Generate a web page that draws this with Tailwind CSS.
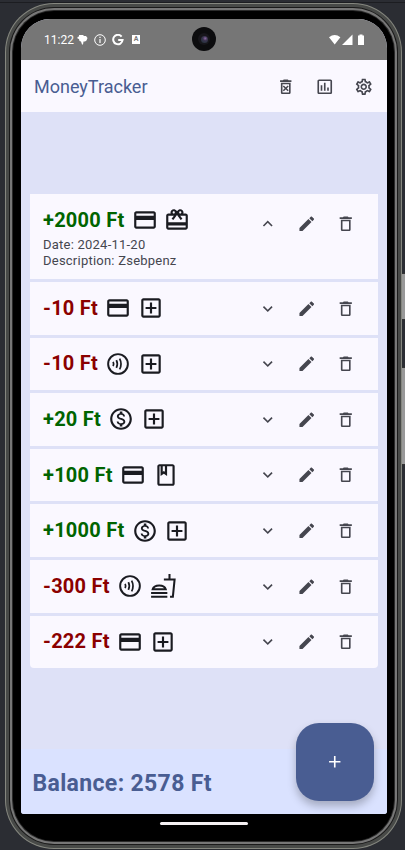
<!DOCTYPE html>
<html lang="en">
<head>
<meta charset="utf-8">
<title>MoneyTracker</title>
<script src="https://cdn.jsdelivr.net/npm/@tailwindcss/browser@4"></script>
</head>
<body class="relative h-[850px] w-[405px] overflow-hidden bg-[#2b2d33] font-[Roboto,sans-serif]">
<svg class="hidden">
  <symbol id="card" viewBox="0 0 24 24"><path d="M20 4H4c-1.11 0-1.99.89-1.99 2L2 18c0 1.11.89 2 2 2h16c1.11 0 2-.89 2-2V6c0-1.11-.89-2-2-2zm0 14H4v-6h16v6zm0-10H4V6h16v2z"/></symbol>
  <symbol id="gift" viewBox="0 0 24 24"><path d="M20 6h-2.18c.11-.31.18-.65.18-1 0-1.66-1.34-3-3-3-1.05 0-1.96.54-2.5 1.35l-.5.67-.5-.68C10.96 2.54 10.05 2 9 2 7.34 2 6 3.34 6 5c0 .35.07.69.18 1H4c-1.11 0-1.99.89-1.99 2L2 19c0 1.11.89 2 2 2h16c1.11 0 2-.89 2-2V8c0-1.11-.89-2-2-2zm-5-2c.55 0 1 .45 1 1s-.45 1-1 1-1-.45-1-1 .45-1 1-1zM9 4c.55 0 1 .45 1 1s-.45 1-1 1-1-.45-1-1 .45-1 1-1zm11 15H4v-2h16v2zm0-5H4V8h5.08L7 10.83 8.62 12 11 8.76l1-1.36 1 1.36L15.38 12 17 10.83 14.92 8H20v6z"/></symbol>
  <symbol id="plusbox" viewBox="0 0 24 24"><path d="M19 3H5c-1.11 0-2 .9-2 2v14c0 1.1.89 2 2 2h14c1.1 0 2-.9 2-2V5c0-1.1-.9-2-2-2zm0 16H5V5h14v14zm-8-2h2v-4h4v-2h-4V7h-2v4H7v2h4z"/></symbol>
  <symbol id="book" viewBox="0 0 24 24"><path d="M18 2H6c-1.1 0-2 .9-2 2v16c0 1.1.9 2 2 2h12c1.1 0 2-.9 2-2V4c0-1.1-.9-2-2-2zM9 4h2v5l-1-.75L9 9V4zm9 16H6V4h1v9l3-2.25L13 13V4h5v16z"/></symbol>
  <symbol id="dollar" viewBox="0 0 24 24"><path d="M12 2C6.48 2 2 6.48 2 12s4.48 10 10 10 10-4.48 10-10S17.52 2 12 2zm0 18c-4.41 0-8-3.59-8-8s3.59-8 8-8 8 3.59 8 8-3.59 8-8 8zm.31-8.86c-1.77-.45-2.34-.94-2.34-1.67 0-.84.79-1.43 2.1-1.43 1.38 0 1.9.66 1.94 1.64h1.71c-.05-1.34-.87-2.57-2.49-2.97V5H10.9v1.69c-1.51.32-2.72 1.3-2.72 2.81 0 1.79 1.49 2.69 3.66 3.21 1.95.46 2.34 1.15 2.34 1.87 0 .53-.39 1.39-2.1 1.39-1.6 0-2.23-.72-2.32-1.64H8.04c.1 1.7 1.36 2.66 2.86 2.97V19h2.34v-1.67c1.52-.29 2.72-1.16 2.73-2.77-.01-2.2-1.9-2.96-3.66-3.42z"/></symbol>
  <symbol id="contactless" viewBox="0 0 24 24"><g fill="none" stroke="currentColor"><circle cx="12" cy="12" r="9.1" stroke-width="1.8"/><path stroke-width="1.6" d="M7.5 10c.6 1.2.6 2.8 0 4M10.500 8.500c1.100 2.200 1.100 4.800 0 7M13.500 7c1.600 3.100 1.600 6.900 0 10"/></g></symbol>
  <symbol id="burger" viewBox="0 0 24 24"><g fill="none" stroke="currentColor" stroke-width="1.9"><path d="M1 18.500h15M1 22h15M2.500 15h12c-1.300-4.700-10.700-4.700-12 0zM18 1v5M12.800 6h9.900l-1.600 16H18.500"/></g></symbol>
  <symbol id="edit" viewBox="0 0 24 24"><path d="M3 17.25V21h3.75L17.81 9.94l-3.75-3.75L3 17.25zM20.71 7.04c.39-.39.39-1.02 0-1.41l-2.34-2.34c-.39-.39-1.02-.39-1.41 0l-1.83 1.83 3.75 3.75 1.83-1.83z"/></symbol>
  <symbol id="trash" viewBox="0 0 24 24"><path d="M6 19c0 1.1.9 2 2 2h8c1.100 0 2-.9 2-2V7H6v12zM8 9h8v10H8V9zm7.500-5l-1-1h-5l-1 1H4.500v2h15V4z"/></symbol>
  <symbol id="down" viewBox="0 0 24 24"><path d="M7.410 8.590 12 13.170l4.590-4.580L18 10l-6 6-6-6z"/></symbol>
  <symbol id="up" viewBox="0 0 24 24"><path d="M7.410 15.410 12 10.830l4.590 4.580L18 14l-6-6-6 6z"/></symbol>
  <symbol id="clear" viewBox="0 0 24 24"><path d="M6 19c0 1.100.9 2 2 2h8c1.100 0 2-.9 2-2V7H6v12zM8 9h8v10H8V9zm7.500-5l-1-1h-5l-1 1H5v2h14V4z"/><path d="m9 11 6 6m0-6-6 6" fill="none" stroke="currentColor" stroke-width="1.900"/></symbol>
  <symbol id="chart" viewBox="0 0 24 24"><path d="M19 3H5c-1.100 0-2 .9-2 2v14c0 1.100.9 2 2 2h14c1.100 0 2-.9 2-2V5c0-1.100-.9-2-2-2zm0 16H5V5h14v14zM7 10h2v7H7zM11 7h2v10h-2zM15 13h2v4h-2z"/></symbol>
  <symbol id="gear" viewBox="0 0 24 24"><path d="M19.43 12.98c.04-.32.07-.64.07-.98 0-.34-.03-.66-.07-.98l2.11-1.65c.19-.15.24-.42.12-.64l-2-3.46c-.09-.16-.26-.25-.44-.25-.06 0-.12.01-.17.03l-2.49 1c-.52-.4-1.08-.73-1.69-.98l-.38-2.65C14.46 2.18 14.25 2 14 2h-4c-.25 0-.46.18-.49.42l-.38 2.65c-.61.25-1.17.59-1.69.98l-2.49-1c-.06-.02-.12-.03-.18-.03-.17 0-.34.09-.43.25l-2 3.46c-.13.22-.07.49.12.64l2.11 1.65c-.04.32-.07.65-.07.98 0 .33.03.66.07.98l-2.11 1.65c-.19.15-.24.42-.12.64l2 3.46c.09.16.26.25.44.25.06 0 .12-.01.17-.03l2.49-1c.52.4 1.08.73 1.69.98l.38 2.65c.03.24.24.42.49.42h4c.25 0 .46-.18.49-.42l.38-2.65c.61-.25 1.17-.59 1.69-.98l2.49 1c.06.02.12.03.18.03.17 0 .34-.09.43-.25l2-3.46c.12-.22.07-.49-.12-.64l-2.11-1.65zm-1.98-1.71c.04.31.05.52.05.73 0 .21-.02.43-.05.73l-.14 1.13.89.7 1.08.84-.7 1.21-1.27-.51-1.04-.42-.9.68c-.43.32-.84.56-1.25.73l-1.06.43-.16 1.13-.2 1.35h-1.4l-.19-1.35-.16-1.13-1.06-.43c-.43-.18-.83-.41-1.23-.71l-.91-.7-1.06.43-1.27.51-.7-1.21 1.08-.84.89-.7-.14-1.13c-.03-.31-.05-.54-.05-.74s.02-.43.05-.73l.14-1.13-.89-.7-1.08-.84.7-1.21 1.27.51 1.04.42.9-.68c.43-.32.84-.56 1.25-.73l1.06-.43.16-1.13.2-1.35h1.39l.19 1.35.16 1.13 1.06.43c.43.18.83.41 1.23.71l.91.7 1.06-.43 1.27-.51.7 1.21-1.07.85-.89.7.14 1.13zM12 8c-2.21 0-4 1.79-4 4s1.79 4 4 4 4-1.79 4-4-1.79-4-4-4zm0 6c-1.1 0-2-.9-2-2s.9-2 2-2 2 .9 2 2-.9 2-2 2z"/></symbol>
</svg>

<!-- Side buttons and window edge -->
<div class="absolute inset-x-0 top-[2px] h-px bg-[#1c1d21]"></div>
<div class="absolute top-[273px] left-[400px] h-[47px] w-[5px] border-y border-[#333] bg-[#999]"></div>
<div class="absolute top-[367px] left-[400px] h-[98px] w-[5px] border-y border-[#333] bg-[#999]"></div>

<!-- Device frame -->
<div class="absolute top-[3px] left-[5px] h-[846px] w-[397px] rounded-[49px] bg-[#85877f] p-px">
<div class="h-full rounded-[48px] bg-[#484a48] p-[3px]">
<div class="h-full rounded-[45px] bg-[#1a1a1a] p-px">
<div class="h-full rounded-[44px] bg-[#777] p-[2px]">
<div class="h-full rounded-[42px] bg-[#2a2a2a] p-px">
<div class="h-full rounded-[41px] bg-black px-[8px] pt-[8px]">

  <!-- Screen -->
  <div class="flex h-[795px] w-[366px] flex-col overflow-hidden rounded-t-[29px] rounded-b-[3px] bg-[#dee1f7]">
    <div class="relative flex h-[41px] shrink-0 items-center bg-[#767676] pl-[23px] text-white">
      <span class="w-[33px] text-[12px] leading-none">11:22</span>
      <svg class="size-[11px]" viewBox="0 0 11 11" fill="currentColor"><path d="M2 1h4l1 1h2l1.500 2-1 2.500L8 7.500H6.500L6 10.500H5L4 7.500 2.500 7 2 5 .5 4.500V3L2 2.500z"/></svg>
      <svg class="ml-[6px] size-[12px]" viewBox="0 0 12 12" fill="none" stroke="currentColor"><circle cx="6" cy="6" r="5.300"/><path d="M6 5v4M6 2.800v1.200" stroke-width="1.200"/></svg>
      <svg class="ml-[6px] size-[12px]" viewBox="0 0 12 12" fill="none" stroke="currentColor" stroke-width="2"><path d="M9.600 2.600A4.700 4.700 0 1 0 10.600 6H6.200"/></svg>
      <span class="ml-[8px] flex h-[9px] w-[8px] items-center justify-center bg-white text-[7px] leading-none font-bold text-[#767676]">A</span>
      <div class="absolute top-[8px] left-[171px] flex size-[24px] items-center justify-center rounded-full bg-[#0c0c0e]"><div class="flex size-[12px] items-center justify-center rounded-full bg-[#17161b]"><div class="size-[7px] rounded-full bg-[radial-gradient(circle_at_60%_35%,#8e6aa5_0,#3c3450_35%,#26323d_80%)]"></div></div></div>
      <svg class="mr-[22px] ml-auto h-[12px] w-[36px]" viewBox="0 0 36 12" fill="currentColor"><path d="M0 3.300q5.700-4.500 11.400 0L5.700 10.600zM23.500 .5V11H13zM29 1.500h1.500V.5h3v1h1.500V11H29z"/></svg>
    </div>
    <header class="flex h-[52px] shrink-0 items-center bg-[#faf8ff] pt-px pr-[3.5px] pl-[13px] text-[#45464f]">
      <h1 class="flex-1 text-[18px] leading-none text-[#495d92]">MoneyTracker</h1>
      <button class="flex w-[39px] justify-center"><svg class="size-[19.5px] fill-current"><use href="#clear"/></svg></button>
      <button class="flex w-[39px] justify-center"><svg class="size-[19.5px] fill-current"><use href="#chart"/></svg></button>
      <button class="flex w-[39px] justify-center"><svg class="size-[19.5px] fill-current"><use href="#gear"/></svg></button>
    </header>
    <main id="list" class="mx-[9px] mt-[82px] flex flex-col gap-[3px] overflow-hidden rounded-b-[4px]"></main>
    <footer class="relative mt-auto flex h-[65px] shrink-0 items-center bg-[#dae2ff] pt-[3px] pl-[11.5px]">
      <span class="text-[23px] leading-none font-bold tracking-[0.35px] text-[#495d92]">Balance: 2578 Ft</span>
      <button class="absolute top-[-26px] left-[274.5px] flex size-[78px] items-center justify-center rounded-[23px] bg-[#495d92] shadow-[0_5px_8px_rgba(0,0,0,0.25)]"><svg class="size-[19.5px]" viewBox="0 0 24 24" fill="white"><path d="M19 13h-6v6h-2v-6H5v-2h6V5h2v6h6z"/></svg></button>
    </footer>
  </div>
  <div class="mx-auto mt-[8px] h-[3px] w-[88px] rounded-full bg-[#f4f0f2]"></div>
</div></div></div></div></div></div>

<script>
const items = [
  ['+2000 Ft','card','gift',['Date: 2024-11-20','Description: Zsebpenz']],
  ['-10 Ft','card','plusbox'],
  ['-10 Ft','contactless','plusbox'],
  ['+20 Ft','dollar','plusbox'],
  ['+100 Ft','card','book'],
  ['+1000 Ft','dollar','plusbox'],
  ['-300 Ft','contactless','burger'],
  ['-222 Ft','card','plusbox']
];
const action = id => `<button class="flex w-[39px] justify-center"><svg class="size-[19.5px] fill-current"><use href="#${id}"/></svg></button>`;
document.getElementById('list').innerHTML = items.map(([amount, pay, kind, details]) => `
  <article class="flex justify-between bg-[#faf8ff] pl-[13px] pr-[13px] ${details ? 'h-[85px] pt-[13px]' : 'h-[52.6px] items-center'}">
    <div>
      <div class="flex items-center gap-[6.5px] text-[#1a1b21]">
        <strong class="pr-[0.8px] pb-px text-[20px] leading-none font-bold tracking-[0.25px] ${amount[0] === '+' ? 'text-[#006400]' : 'text-[#8b0000]'}">${amount}</strong>
        <svg class="size-[26px] fill-current"><use href="#${pay}"/></svg>
        <svg class="size-[26px] fill-current"><use href="#${kind}"/></svg>
      </div>
      ${details ? `<div class="mt-[4px] text-[13px] leading-[16.25px] tracking-[0.23px] text-[#45464f]">${details.map(d => `<p>${d}</p>`).join('')}</div>` : ''}
    </div>
    <div class="flex text-[#45464f] ${details ? 'h-[33px] items-center' : ''}">${action(details ? 'up' : 'down')}${action('edit')}${action('trash')}</div>
  </article>`).join('');
</script>
</body>
</html>
